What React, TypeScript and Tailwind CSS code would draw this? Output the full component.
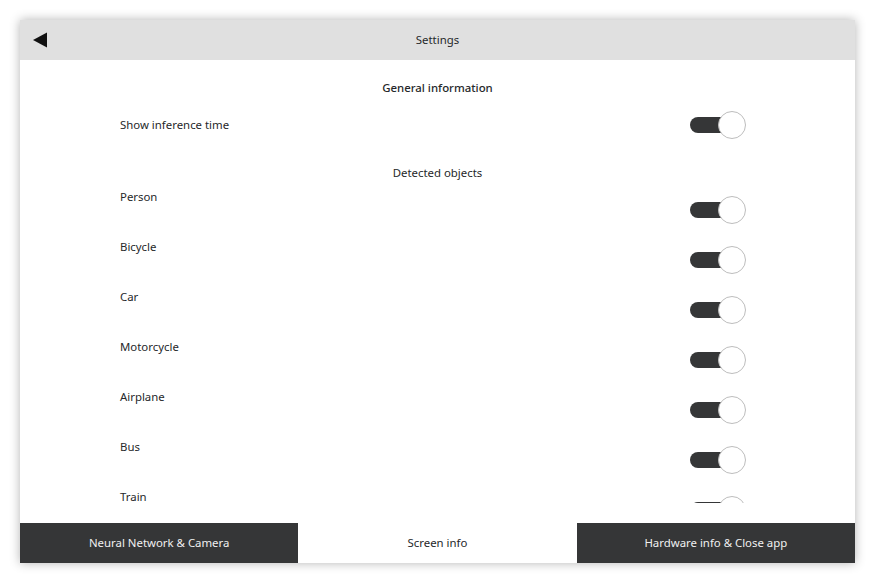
import { useState } from 'react';

const objects = ['Person', 'Bicycle', 'Car', 'Motorcycle', 'Airplane', 'Bus', 'Train'];

function Toggle({ on, onClick }: { on: boolean; onClick: () => void }) {
  return (
    <button onClick={onClick} className="relative w-[56px] h-[28px] shrink-0">
      <span className={`absolute left-0 top-[6px] w-[40px] h-[16px] rounded-full ${on ? 'bg-[#353637]' : 'bg-[#e0e0e0]'}`} />
      <span
        className={`absolute top-0 w-[28px] h-[28px] rounded-full bg-white border border-[#bdbdbd] ${on ? 'left-[28px]' : 'left-0'}`}
      />
    </button>
  );
}

export default function App() {
  const [showTime, setShowTime] = useState(true);
  const [enabled, setEnabled] = useState<Record<string, boolean>>(
    Object.fromEntries(objects.map((o) => [o, true]))
  );
  const [tab, setTab] = useState(1);

  const tabs = ['Neural Network & Camera', 'Screen info', 'Hardware info & Close app'];

  return (
    <div className="w-[875px] h-[583px] bg-white p-[20px] text-[11.4px] text-[#26282a] [font-family:'Noto_Sans',sans-serif]">
      <div className="w-[835px] h-[543px] flex flex-col bg-white shadow-[0_0_10px_rgba(0,0,0,0.3)]">
        {/* Header */}
        <div className="h-[40px] bg-[#e0e0e0] flex items-center relative shrink-0">
          <button className="absolute left-[12px] top-[12px]">
            <svg width="16" height="16" viewBox="0 0 16 16">
              <polygon points="1,8 15,0.5 15,15.5" fill="#111" />
            </svg>
          </button>
          <div className="flex-1 text-center">Settings</div>
        </div>

        {/* Content */}
        <div className="h-[443px] overflow-hidden shrink-0">
          <div className="pt-[18px] flex flex-col">
            <div className="h-[20px] leading-[20px] text-center font-medium">General information</div>
            <div className="mt-[13px] h-[28px] flex items-center pl-[100px] pr-[109px]">
              <span className="flex-1">Show inference time</span>
              <Toggle on={showTime} onClick={() => setShowTime(!showTime)} />
            </div>
            <div className="mt-[24px] h-[20px] leading-[20px] text-center">Detected objects</div>
            <div className="mt-[4px] flex flex-col">
              {objects.map((o) => (
                <div key={o} className="h-[50px] flex pl-[100px] pr-[109px]">
                  <span className="flex-1 h-[12px] leading-[12px] mt-[4px]">{o}</span>
                  <div className="pt-[9px]">
                    <Toggle on={enabled[o]} onClick={() => setEnabled({ ...enabled, [o]: !enabled[o] })} />
                  </div>
                </div>
              ))}
            </div>
          </div>
        </div>
        <div className="flex-1" />

        {/* Tabs */}
        <div className="h-[40px] flex shrink-0">
          {tabs.map((t, i) => (
            <button
              key={t}
              onClick={() => setTab(i)}
              className={`flex-1 flex items-center justify-center ${tab === i ? 'bg-white text-[#26282a]' : 'bg-[#353637] text-[#f0f0f0]'}`}
            >
              {t}
            </button>
          ))}
        </div>
      </div>
    </div>
  );
}
